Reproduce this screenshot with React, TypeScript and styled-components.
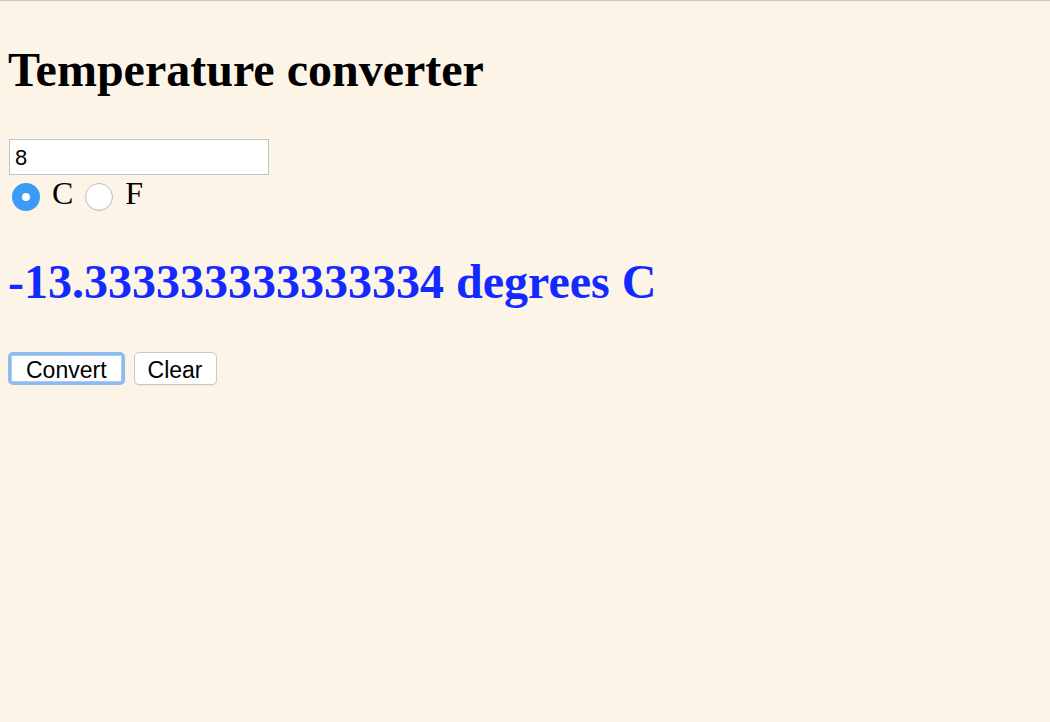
import React, { useState } from "react";
import styled, { createGlobalStyle } from "styled-components";

const GlobalStyle = createGlobalStyle`
  html, body {
    margin: 0;
    padding: 0;
    background: #fdf4e8;
  }
  body {
    font-family: "Liberation Serif", "Times New Roman", serif;
    color: #000;
  }
`;

const Page = styled.main`
  min-height: 721px;
  border-top: 1px solid #c6c6c6;
  padding: 0 8px;
  display: flex;
  flex-direction: column;
  align-items: flex-start;
`;

const Title = styled.h1`
  margin: 41px 0 0;
  font-size: 48px;
  line-height: 56px;
  font-weight: 700;
  font-family: "Liberation Serif", "Times New Roman", serif;
`;

const TempInput = styled.input`
  margin: 41px 0 0 1px;
  box-sizing: border-box;
  width: 260px;
  height: 36px;
  border: 1px solid #c3c3c3;
  background: #fff;
  padding: 2px 5px 0;
  font-family: "Liberation Sans", Arial, sans-serif;
  font-size: 22px;
  color: #000;
  outline: none;
`;

const RadioRow = styled.div`
  display: flex;
  align-items: flex-start;
  height: 36px;
  font-size: 32px;
  line-height: 36px;
`;

const RadioLabel = styled.label<{ $first?: boolean }>`
  display: flex;
  align-items: flex-start;
  cursor: pointer;
  margin-left: ${(p) => (p.$first ? "4px" : "12px")};
`;

const Radio = styled.input`
  appearance: none;
  -webkit-appearance: none;
  box-sizing: border-box;
  margin: 8px 12px 0 0;
  width: 28px;
  height: 28px;
  border-radius: 50%;
  border: 1px solid #bdbdbd;
  background: #fff;
  box-shadow: inset 0 -1px 2px rgba(0, 0, 0, 0.06);
  position: relative;
  cursor: pointer;

  &:checked {
    border: none;
    background: #3d9bf8;
    box-shadow: none;
  }
  &:checked::after {
    content: "";
    position: absolute;
    left: 50%;
    top: 50%;
    width: 8px;
    height: 8px;
    margin: -4px 0 0 -4px;
    border-radius: 50%;
    background: #fff;
  }
`;

const Result = styled.h2`
  margin: 43px 0 0;
  font-size: 48px;
  line-height: 56px;
  font-weight: 700;
  color: #1229ff;
  font-family: "Liberation Serif", "Times New Roman", serif;
`;

const ButtonRow = styled.div`
  display: flex;
  gap: 9px;
  margin: 42px 0 0;
`;

const Button = styled.button<{ $focused?: boolean }>`
  box-sizing: border-box;
  height: 33px;
  padding: 2px ${(p) => (p.$focused ? "15px" : "13px")} 0;
  border: ${(p) => (p.$focused ? "3px solid #8dbbef" : "1px solid #c9c9c9")};
  border-radius: 5px;
  background: #fff;
  font-family: "Liberation Sans", Arial, sans-serif;
  font-size: 23px;
  line-height: 26px;
  color: #000;
  cursor: pointer;
  box-shadow: ${(p) =>
    p.$focused
      ? "inset 0 0 0 1px #a9cbf3"
      : "0 1px 1px rgba(0,0,0,0.06)"};
  outline: none;
`;

export default function App() {
  const [value, setValue] = useState("8");
  const [unit, setUnit] = useState<"C" | "F">("C");
  const [result, setResult] = useState("-13.333333333333334 degrees C");

  const convert = () => {
    const n = parseFloat(value);
    if (isNaN(n)) {
      setResult("");
      return;
    }
    if (unit === "C") setResult(`${((n - 32) * 5) / 9} degrees C`);
    else setResult(`${(n * 9) / 5 + 32} degrees F`);
  };

  return (
    <>
      <GlobalStyle />
      <Page>
        <Title>Temperature converter</Title>
        <TempInput value={value} onChange={(e) => setValue(e.target.value)} />
        <RadioRow>
          <RadioLabel $first>
            <Radio
              type="radio"
              name="unit"
              checked={unit === "C"}
              onChange={() => setUnit("C")}
            />
            C
          </RadioLabel>
          <RadioLabel>
            <Radio
              type="radio"
              name="unit"
              checked={unit === "F"}
              onChange={() => setUnit("F")}
            />
            F
          </RadioLabel>
        </RadioRow>
        <Result>{result}</Result>
        <ButtonRow>
          <Button $focused onClick={convert}>
            Convert
          </Button>
          <Button
            onClick={() => {
              setValue("");
              setResult("");
            }}
          >
            Clear
          </Button>
        </ButtonRow>
      </Page>
    </>
  );
}
